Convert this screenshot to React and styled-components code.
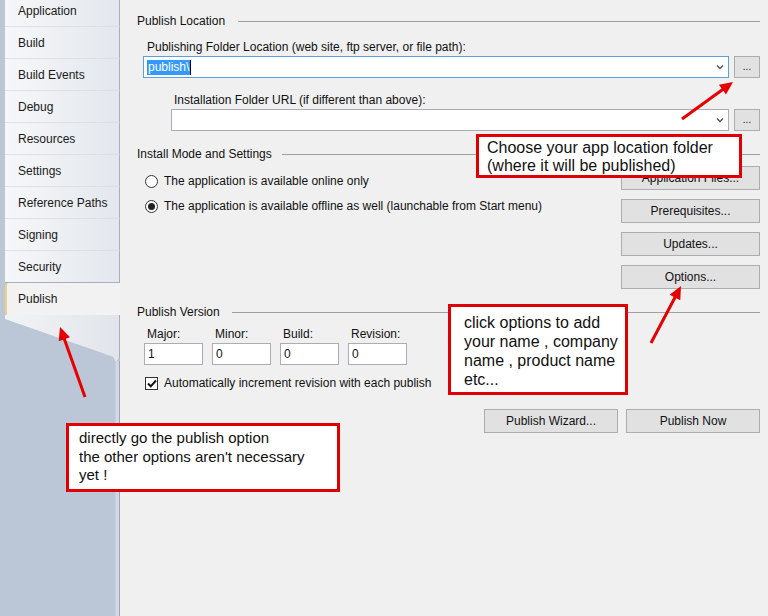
import React from "react";
import styled, { createGlobalStyle } from "styled-components";

const GlobalStyle = createGlobalStyle`
  html, body { margin: 0; padding: 0; background: #f0f0f0; overflow: hidden; }
  * { box-sizing: border-box; }
`;

const UI = `"Liberation Sans", Arial, sans-serif`;

const Page = styled.div`
  position: relative;
  width: 768px;
  height: 616px;
  display: flex;
  font-family: ${UI};
  font-size: 12px;
  color: #111;
  background: #f0f0f0;
  overflow: hidden;
`;

const Sidebar = styled.div`
  width: 120px;
  flex: none;
  background: #bbc6d7;
  display: flex;
  flex-direction: column;
  padding-left: 5px;
`;

const TabList = styled.div`
  margin-top: -5px;
  display: flex;
  flex-direction: column;
`;

const Tab = styled.div`
  height: 32px;
  width: 115px;
  display: flex;
  align-items: center;
  color: #1a1a1a;
  background: ${(p) => (p.$active ? "#f2f2f2" : "linear-gradient(to right, #f6f7f8, #e3e7ed)")};
  border-right: ${(p) => (p.$active ? "none" : "1px solid #a7afbe")};
  border-bottom: 1px solid ${(p) => (p.$last ? "#a7afbe" : p.$active ? "transparent" : "#dde1e6")};
  border-left: ${(p) => (p.$active ? "2px solid #f0d184" : "none")};
  border-radius: ${(p) => (p.$active ? "3px 0 0 3px" : "0")};
  padding-left: ${(p) => (p.$active ? "11px" : "13px")};
`;

const Fold = styled.div`
  height: 46px;
  width: 115px;
  background: linear-gradient(to right, #f2f3f5, #e1e5eb);
  border-right: 1px solid #a7afbe;
  clip-path: polygon(0 0, 100% 0, 100% 100%, 96% 100%, 94% 91%, 0 4px);
  border-radius: 0 0 4px 0;
`;

const Rail = styled.div`
  flex: 1;
  align-self: flex-end;
  width: 5px;
  background: #d2d9e4;
  border-right: 1px solid #9ba3b4;
  border-left: 1px solid #c6cfdc;
`;

const Main = styled.div`
  flex: 1;
  padding: 13px 8px 0 17px;
  display: flex;
  flex-direction: column;
`;

const SectionHeader = styled.div`
  display: flex;
  align-items: center;
  height: 16px;
  line-height: 16px;
  gap: 8px;
  margin-top: ${(p) => p.$mt || 0}px;
  &::after {
    content: "";
    flex: 1;
    height: 1px;
    background: #a0a0a0;
    margin-left: ${(p) => p.$lineGap || 0}px;
  }
`;

const FieldLabel = styled.div`
  height: 16px;
  line-height: 16px;
  margin-left: ${(p) => p.$ml}px;
  margin-top: ${(p) => p.$mt}px;
`;

const ComboRow = styled.div`
  display: flex;
  gap: 5px;
  margin-left: ${(p) => p.$ml}px;
  margin-top: 1px;
`;

const Combo = styled.div`
  flex: 1;
  height: 22px;
  background: #fff;
  border: 1px solid ${(p) => (p.$focused ? "#5c9fe0" : "#abadb3")};
  display: flex;
  align-items: center;
  padding: 0 4px 0 3px;
`;

const Selected = styled.span`
  background: #3399ff;
  color: #fff;
  line-height: 15px;
  padding: 0 1px;
  border-right: 1px solid #000;
`;

const ComboArrow = styled.svg`
  margin-left: auto;
  width: 8px;
  height: 6px;
`;

const SmallButton = styled.div`
  width: 26px;
  height: 22px;
  border: 1px solid #adadad;
  background: #e1e1e1;
  display: flex;
  align-items: center;
  justify-content: center;
  font-size: 10px;
  padding-bottom: 2px;
`;

const InstallGrid = styled.div`
  display: grid;
  grid-template-columns: 1fr 139px;
  margin-top: 4px;
`;

const RadioList = styled.div`
  display: flex;
  flex-direction: column;
  gap: 9px;
  padding-top: 7px;
  padding-left: 8px;
`;

const OptionRow = styled.label`
  display: flex;
  align-items: center;
  height: 16px;
  gap: 6px;
  margin-left: ${(p) => p.$ml || 0}px;
  margin-top: ${(p) => p.$mt || 0}px;
`;

const Radio = styled.span`
  width: 13px;
  height: 13px;
  border-radius: 50%;
  border: 1px solid #333;
  background: #fff;
  display: flex;
  align-items: center;
  justify-content: center;
  &::after {
    content: "";
    width: 7px;
    height: 7px;
    border-radius: 50%;
    background: ${(p) => (p.$checked ? "#222" : "transparent")};
  }
`;

const Check = styled.span`
  width: 13px;
  height: 13px;
  border: 1px solid #333;
  background: #fff;
  display: flex;
  align-items: center;
  justify-content: center;
`;

const ButtonColumn = styled.div`
  display: flex;
  flex-direction: column;
  gap: 9px;
`;

const Button = styled.div`
  width: ${(p) => p.$w || 139}px;
  height: 24px;
  border: 1px solid #adadad;
  background: #e1e1e1;
  display: flex;
  align-items: center;
  justify-content: center;
`;

const VersionGrid = styled.div`
  display: grid;
  grid-template-columns: repeat(4, 59px);
  column-gap: 9px;
  margin-left: 7px;
  margin-top: 6px;
`;

const VersionLabel = styled.div`
  height: 16px;
  line-height: 16px;
  padding-left: 3px;
`;

const VersionInput = styled.div`
  height: 22px;
  margin-top: 1px;
  border: 1px solid #abadb3;
  background: #fff;
  display: flex;
  align-items: center;
  padding-left: 3px;
`;

const BottomButtons = styled.div`
  display: flex;
  justify-content: flex-end;
  gap: 8px;
  margin-top: 18px;
`;

const Note = styled.div`
  position: absolute;
  left: ${(p) => p.$x}px;
  top: ${(p) => p.$y}px;
  width: ${(p) => p.$w}px;
  height: ${(p) => p.$h}px;
  background: #fff;
  border: 3px solid #e10000;
  font-family: ${UI};
  font-size: ${(p) => p.$fs}px;
  line-height: ${(p) => p.$lh}px;
  color: #111;
  padding: ${(p) => p.$pad};
  white-space: pre;
`;

const Overlay = styled.svg`
  position: absolute;
  left: 0;
  top: 0;
  pointer-events: none;
`;

function Arrow({ x1, y1, x2, y2 }) {
  const dx = x2 - x1, dy = y2 - y1;
  const len = Math.hypot(dx, dy);
  const ux = dx / len, uy = dy / len;
  const hl = 13, hw = 6;
  const bx = x2 - ux * hl, by = y2 - uy * hl;
  const pts = `${x2},${y2} ${bx - uy * hw},${by + ux * hw} ${bx + uy * hw},${by - ux * hw}`;
  return (
    <g>
      <line x1={x1} y1={y1} x2={bx + ux * 2} y2={by + uy * 2} stroke="#e60000" strokeWidth="3" />
      <polygon points={pts} fill="#e60000" />
    </g>
  );
}

const Chevron = () => (
  <ComboArrow viewBox="0 0 8 6">
    <path d="M1 1.5 L4 4.5 L7 1.5" fill="none" stroke="#555" strokeWidth="1.5" />
  </ComboArrow>
);

const tabs = ["Application", "Build", "Build Events", "Debug", "Resources", "Settings", "Reference Paths", "Signing", "Security"];

export default function App() {
  return (
    <>
      <GlobalStyle />
      <Page>
        <Sidebar>
          <TabList>
            {tabs.map((t, i) => (
              <Tab key={t} $last={i === tabs.length - 1}>{t}</Tab>
            ))}
            <Tab $active>Publish</Tab>
          </TabList>
          <Fold />
          <Rail />
        </Sidebar>
        <Main>
          <SectionHeader $lineGap={5}>Publish Location</SectionHeader>
          <FieldLabel $ml={10} $mt={10}>Publishing Folder Location (web site, ftp server, or file path):</FieldLabel>
          <ComboRow $ml={6}>
            <Combo $focused>
              <Selected>publish\</Selected>
              <Chevron />
            </Combo>
            <SmallButton>...</SmallButton>
          </ComboRow>
          <FieldLabel $ml={37} $mt={14}>Installation Folder URL (if different than above):</FieldLabel>
          <ComboRow $ml={34}>
            <Combo>
              <Chevron />
            </Combo>
            <SmallButton>...</SmallButton>
          </ComboRow>
          <SectionHeader $mt={15} $lineGap={2}>Install Mode and Settings</SectionHeader>
          <InstallGrid>
            <RadioList>
              <OptionRow><Radio />The application is available online only</OptionRow>
              <OptionRow><Radio $checked />The application is available offline as well (launchable from Start menu)</OptionRow>
            </RadioList>
            <ButtonColumn>
              <Button>Application Files...</Button>
              <Button>Prerequisites...</Button>
              <Button>Updates...</Button>
              <Button>Options...</Button>
            </ButtonColumn>
          </InstallGrid>
          <SectionHeader $mt={15} $lineGap={4}>Publish Version</SectionHeader>
          <VersionGrid>
            <VersionLabel>Major:</VersionLabel>
            <VersionLabel>Minor:</VersionLabel>
            <VersionLabel>Build:</VersionLabel>
            <VersionLabel>Revision:</VersionLabel>
            <VersionInput>1</VersionInput>
            <VersionInput>0</VersionInput>
            <VersionInput>0</VersionInput>
            <VersionInput>0</VersionInput>
          </VersionGrid>
          <OptionRow $ml={8} $mt={10}>
            <Check>
              <svg width="10" height="9" viewBox="0 0 10 9">
                <path d="M1 4.5 L3.8 7.3 L9 1.5" fill="none" stroke="#111" strokeWidth="2" />
              </svg>
            </Check>
            Automatically increment revision with each publish
          </OptionRow>
          <BottomButtons>
            <Button $w={134}>Publish Wizard...</Button>
            <Button $w={134}>Publish Now</Button>
          </BottomButtons>
        </Main>

        <Note $x={476} $y={134} $w={266} $h={44} $fs={16} $lh={18} $pad="2px 0 0 8px">
          {"Choose your app location folder\n(where it will be published)"}
        </Note>
        <Note $x={448} $y={304} $w={180} $h={91} $fs={16} $lh={19} $pad="6px 0 0 13px">
          {"click options to add\nyour name , company\nname , product name\netc..."}
        </Note>
        <Note $x={66} $y={423} $w={274} $h={69} $fs={15} $lh={18.5} $pad="3px 0 0 10px">
          {"directly go the publish option\nthe other options aren't necessary\nyet !"}
        </Note>

        <Overlay width="768" height="616" viewBox="0 0 768 616">
          <Arrow x1={682} y1={119} x2={733} y2={82} />
          <Arrow x1={651} y1={343} x2={681} y2={286} />
          <Arrow x1={85} y1={397} x2={60} y2={327} />
        </Overlay>
      </Page>
    </>
  );
}
